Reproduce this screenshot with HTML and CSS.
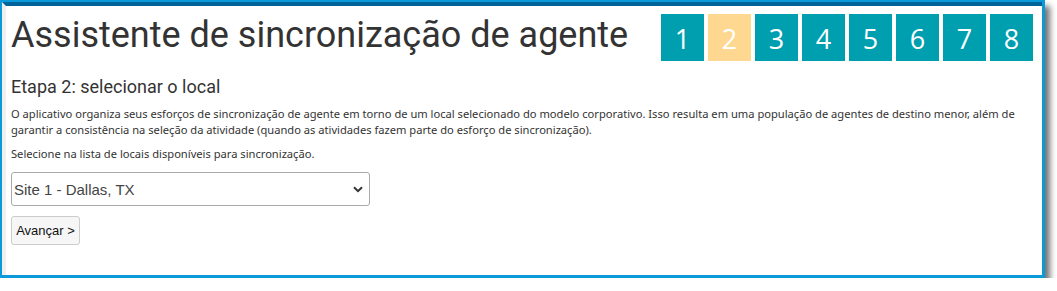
FILE: index.html
```html
<!DOCTYPE html>
<html lang="pt">
<head>
<meta charset="utf-8">
<link rel="stylesheet" href="styles.css">
</head>
<body>
<div class="frame">
  <div class="inner">
    <div class="header">
      <h1 class="title">Assistente de sincronização de agente</h1>
      <div class="steps">
        <span class="step">1</span>
        <span class="step current">2</span>
        <span class="step">3</span>
        <span class="step">4</span>
        <span class="step">5</span>
        <span class="step">6</span>
        <span class="step">7</span>
        <span class="step">8</span>
      </div>
    </div>
    <h2 class="subtitle">Etapa 2: selecionar o local</h2>
    <p class="text">O aplicativo organiza seus esforços de sincronização de agente em torno de um local selecionado do modelo corporativo. Isso resulta em uma população de agentes de destino menor, além de garantir a consistência na seleção da atividade (quando as atividades fazem parte do esforço de sincronização).</p>
    <p class="text">Selecione na lista de locais disponíveis para sincronização.</p>
    <div class="select">
      <span>Site 1 - Dallas, TX</span>
      <svg class="chev" width="10" height="7" viewBox="0 0 10 7"><path d="M1 1.2 L5 5.2 L9 1.2" fill="none" stroke="#333" stroke-width="2"/></svg>
    </div>
    <button class="btn">Avançar &gt;</button>
  </div>
</div>
</body>
</html>
```

FILE: styles.css
```css
html, body {
  margin: 0;
  padding: 0;
  background: #fff;
}
.frame {
  width: 1045px;
  height: 278px;
  box-sizing: border-box;
  border: 2px solid #0b9ad9;
  border-right-width: 3px;
  border-bottom-width: 3px;
  box-shadow: 5px 6px 6px rgba(0,0,0,0.55);
  background: #fff;
}
.inner {
  height: 100%;
  box-sizing: border-box;
  border-top: 4px solid #00649a;
  border-left: 4px solid #efefef;
  padding: 0 0 0 5px;
}
.header {
  display: flex;
  justify-content: space-between;
  align-items: flex-start;
}
.title {
  margin: 6px 0 0 0;
  font-family: Roboto, "Liberation Sans", sans-serif;
  font-weight: 400;
  font-size: 36px;
  line-height: 46px;
  color: #333;
  white-space: nowrap;
}
.steps {
  display: flex;
  gap: 4px;
  margin: 8px 9px 0 0;
}
.step {
  width: 43px;
  height: 47px;
  box-sizing: border-box;
  padding-top: 2px;
  background: #009fb0;
  color: #fff;
  font-family: "Open Sans", "Noto Sans", sans-serif;
  font-size: 27px;
  display: flex;
  align-items: center;
  justify-content: center;
}
.step.current {
  background: #fed891;
}
.subtitle {
  margin: 14px 0 0 0;
  font-family: Roboto, "Liberation Sans", sans-serif;
  font-weight: 400;
  font-size: 18px;
  line-height: 23px;
  color: #333;
}
.text {
  margin: 8px 0 0 0;
  font-family: "Noto Sans", "Open Sans", sans-serif;
  font-size: 11.15px;
  line-height: 16px;
  color: #333;
  padding-right: 10px;
}
.select {
  margin-top: 10px;
  width: 359px;
  height: 34px;
  box-sizing: border-box;
  border: 1px solid #aaa;
  border-radius: 3px;
  display: flex;
  align-items: center;
  justify-content: space-between;
  padding: 0 6px 0 2px;
  font-family: "Liberation Sans", Arial, sans-serif;
  font-size: 15px;
  color: #444;
}
.btn {
  display: block;
  margin-top: 10px;
  width: 69px;
  height: 29px;
  box-sizing: border-box;
  border: 1px solid #ccc;
  border-radius: 3px;
  background: #f6f6f6;
  font-family: "Liberation Sans", Arial, sans-serif;
  font-size: 13px;
  color: #111;
  padding: 0;
}
```
